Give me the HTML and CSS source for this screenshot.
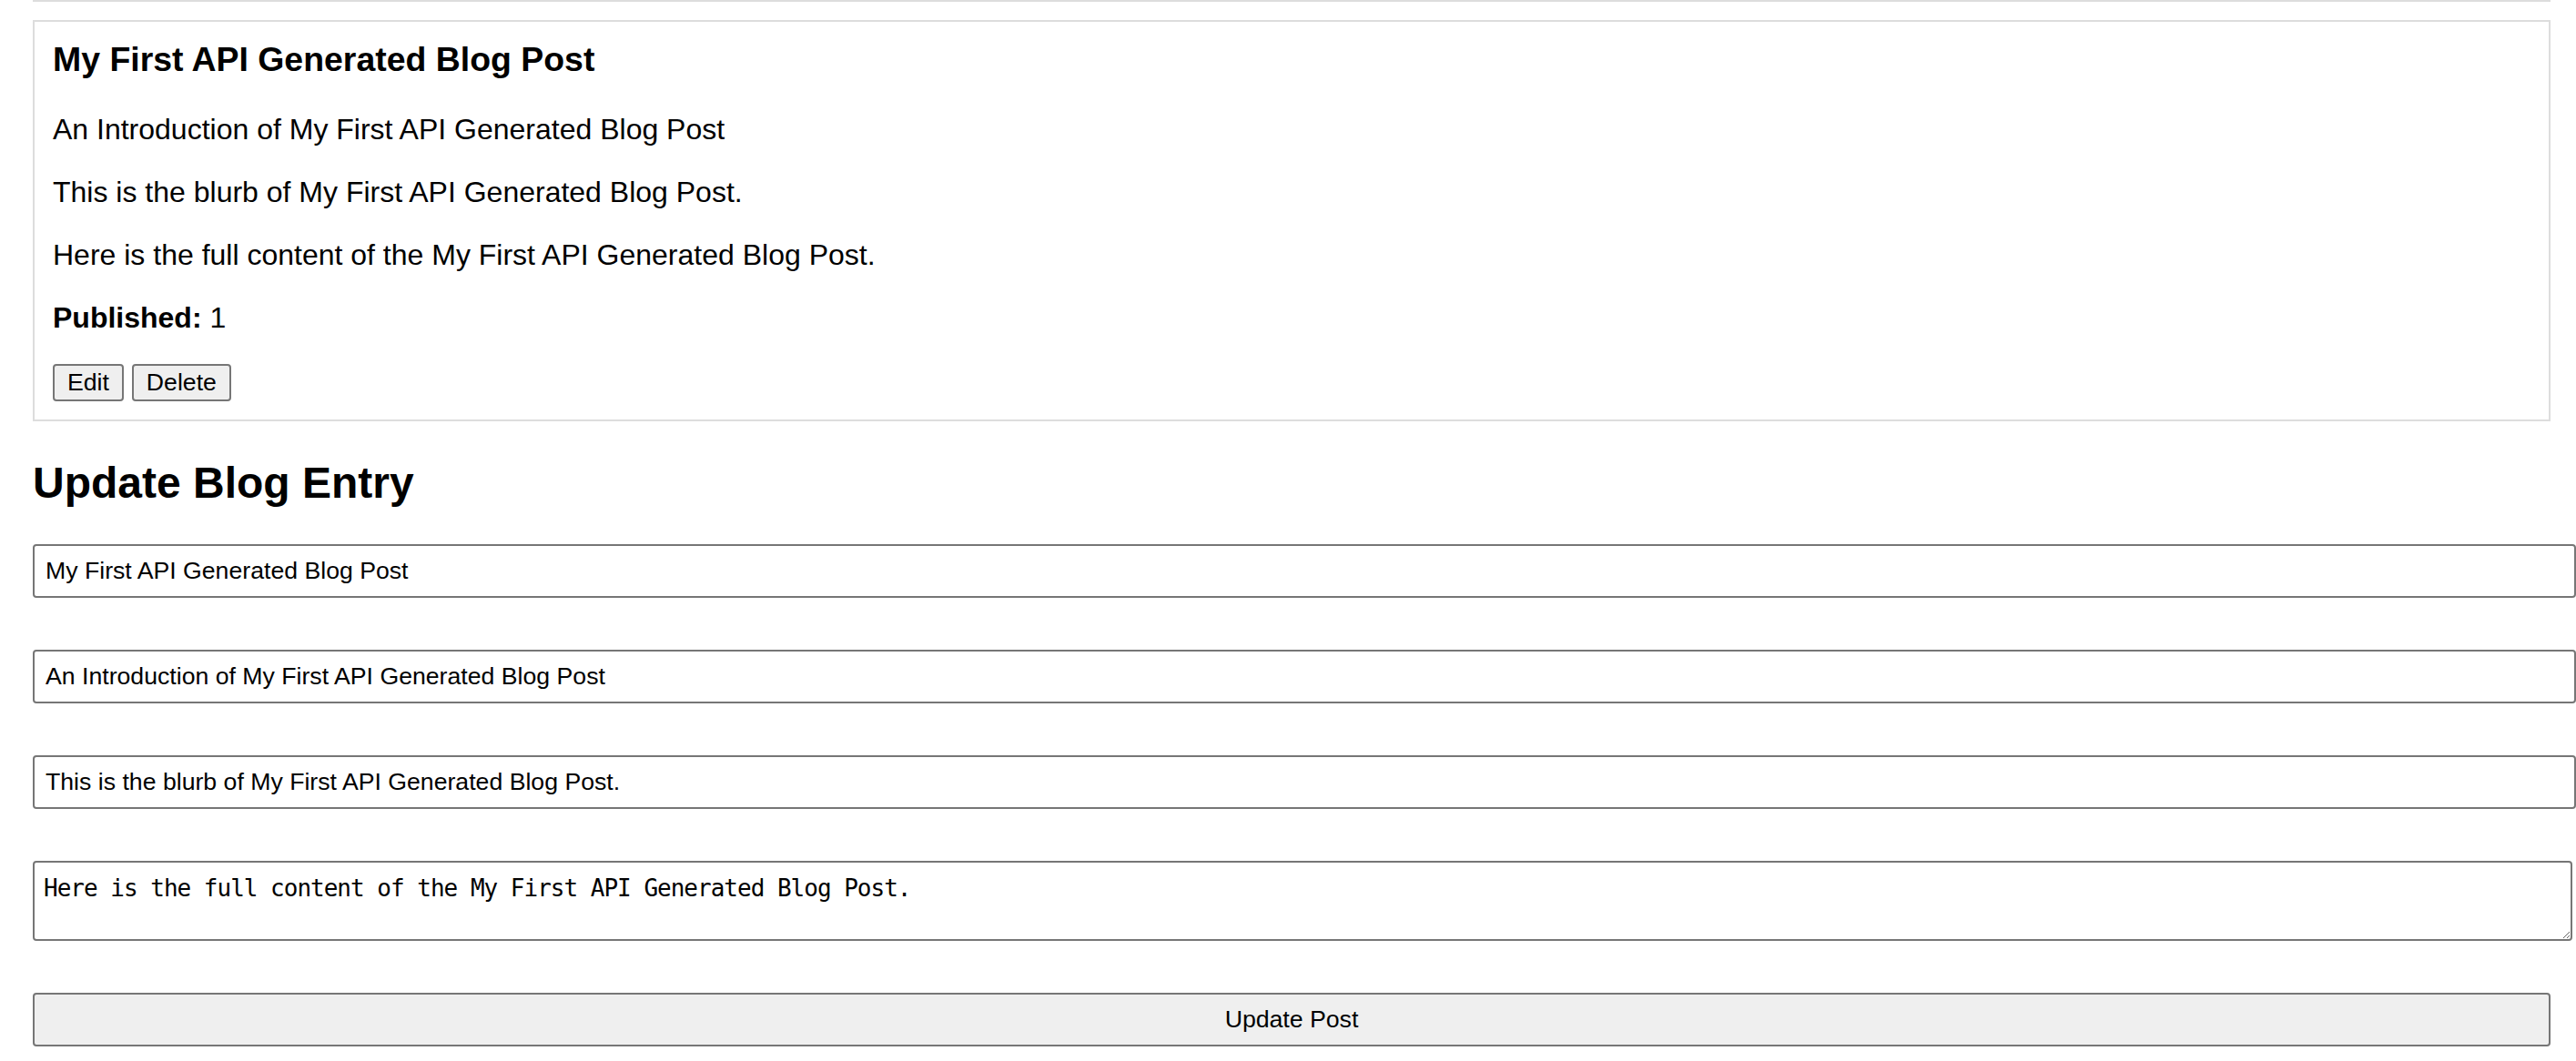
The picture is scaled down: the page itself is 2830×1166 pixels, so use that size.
FILE: index.html
```html
<!DOCTYPE html>
<html lang="en">
<head>
<meta charset="utf-8">
<title>Blog Posts</title>
<link rel="stylesheet" href="styles.css">
</head>
<body>
<div class="page">
  <div class="post-edge"></div>
  <div class="post">
    <h3 class="post-title">My First API Generated Blog Post</h3>
    <p class="post-text">An Introduction of My First API Generated Blog Post</p>
    <p class="post-text">This is the blurb of My First API Generated Blog Post.</p>
    <p class="post-text">Here is the full content of the My First API Generated Blog Post.</p>
    <p class="post-text"><strong>Published:</strong> 1</p>
    <div class="post-actions">
      <button class="btn" type="button">Edit</button>
      <button class="btn" type="button">Delete</button>
    </div>
  </div>
  <h2 class="form-title">Update Blog Entry</h2>
  <form class="entry-form">
    <input class="field" type="text" value="My First API Generated Blog Post">
    <input class="field" type="text" value="An Introduction of My First API Generated Blog Post">
    <input class="field" type="text" value="This is the blurb of My First API Generated Blog Post.">
    <textarea class="field field-area">Here is the full content of the My First API Generated Blog Post.</textarea>
    <button class="btn btn-submit" type="button">Update Post</button>
  </form>
</div>
</body>
</html>
```

FILE: styles.css
```css
html, body {
  margin: 0;
  padding: 0;
  background: #ffffff;
}

body {
  font-family: "Liberation Sans", Arial, sans-serif;
  font-size: 32px;
  color: #000000;
  overflow: hidden;
}

.page {
  margin-left: 36px;
  width: 2766px;
}

.post-edge {
  height: 0;
  border-bottom: 2px solid #dddddd;
  margin-bottom: 20px;
}

.post {
  border: 2px solid #dddddd;
  padding: 20px;
  margin-bottom: 20px;
}

.post-title {
  font-size: 37.44px;
  font-weight: bold;
  margin: 0 0 37.44px;
}

.post-text {
  margin: 32px 0;
}

.post-actions {
  line-height: normal;
}

.btn {
  font-family: "Liberation Sans", Arial, sans-serif;
  font-size: 26.67px;
  color: #000000;
  background: #efefef;
  border: 2px solid #767676;
  border-radius: 4px;
  padding: 3px 14px;
  margin: 0;
}

.form-title {
  font-size: 48px;
  font-weight: bold;
  margin: 40px 0;
}

.entry-form {
  margin: 0;
}

.field {
  display: block;
  box-sizing: content-box;
  width: 100%;
  font-family: "Liberation Sans", Arial, sans-serif;
  font-size: 26.67px;
  color: #000000;
  background: #ffffff;
  border: 2px solid #767676;
  border-radius: 4px;
  padding: 12px;
  margin: 0 0 57px;
  outline: none;
}

.field-area {
  font-family: "DejaVu Sans Mono", "Liberation Mono", monospace;
  font-size: 26px;
  letter-spacing: -1px;
  padding: 13px 10px 7px;
  height: 64px;
  line-height: 31px;
  resize: vertical;
}

.btn-submit {
  display: block;
  width: 100%;
  box-sizing: border-box;
  padding: 12px;
}
```
